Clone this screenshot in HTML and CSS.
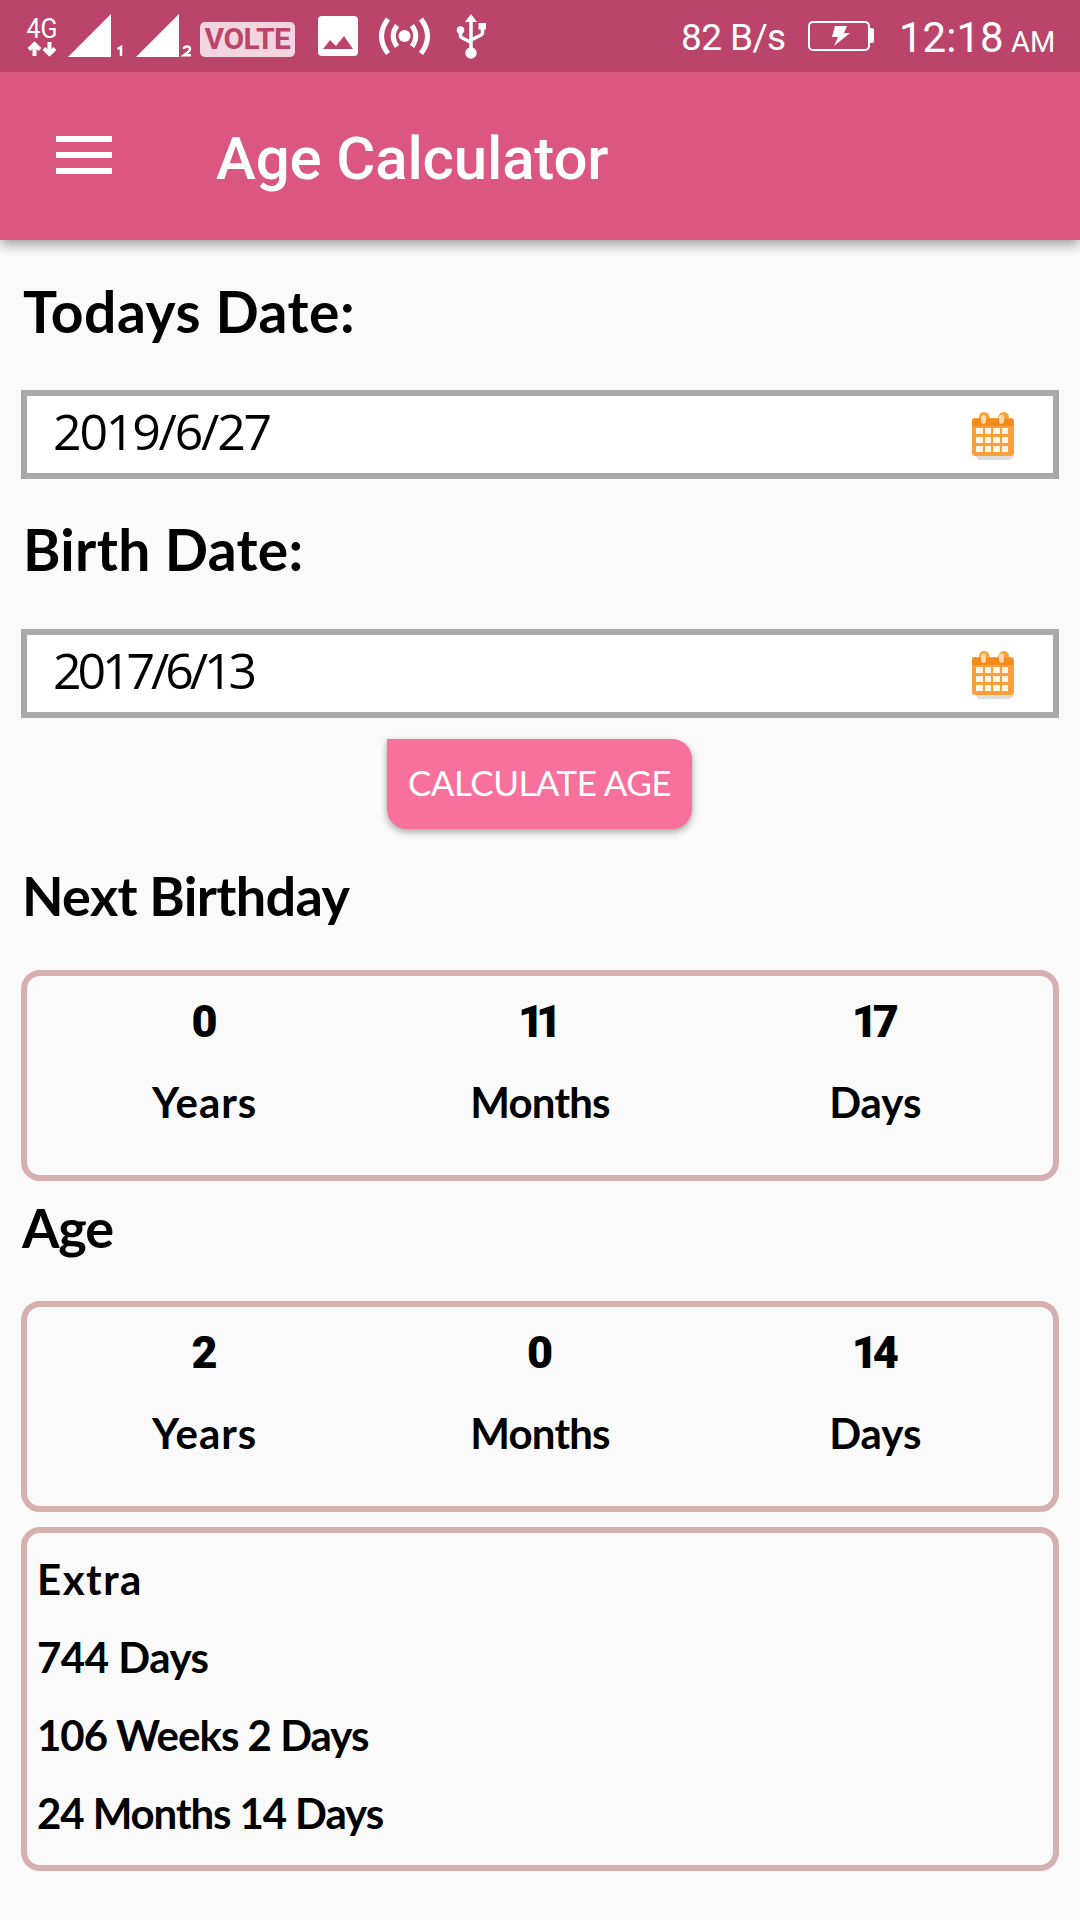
FILE: index.html
```html
<!DOCTYPE html>
<html lang="en">

<head>
  <meta charset="utf-8">
  <title>Age Calculator</title>
  <link rel="stylesheet" href="styles.css">
</head>

<body>
  <svg class="defs">
    <symbol id="calendar" viewBox="0 0 44 50">
      <path d="M4 44h38v3q-2 2-5 2H7z" fill="#ddd" />
      <path d="M3 7h5q0-6 5-6t6 6h8q1-6 6-6t5 6h2q3 0 3 3v32q0 3-3 3H4q-3 0-3-3V10q0-3 2-3z" fill="#f9a03c" />
      <path d="M3 8h37q2 0 2 3v4H1v-4q0-3 2-3z" fill="#f58a1c" />
      <path d="M10 5q3-3 5 0v6q-2 4-5 0zM28 5q3-3 5 0v6q-2 4-5 0z" fill="#fdd9ac" />
      <path d="M5 17h7v6H5zM14 17h6v6h-6zM22 17h7v6h-7zM31 17h6v6h-6zM5 26h7v6H5zM14 26h6v6h-6zM22 26h7v6h-7zM31 26h6v6h-6zM5 35h7v6H5zM14 35h6v6h-6zM22 35h7v6h-7zM31 35h6v6h-6z" fill="#fff6ea" />
    </symbol>
  </svg>

  <div class="status">
    <svg class="network" viewBox="22 0 38 72" width="38" height="72">
      <text x="26.500" y="38" class="net-text" textLength="31" lengthAdjust="spacingAndGlyphs">4G</text>
      <path d="M34.500 56V45M29 49.500l5.500-5.500 5.500 5.500M49.500 42v11M44 48.500l5.500 5.500 5.500-5.500" class="arrows" />
    </svg>
    <svg class="signal" viewBox="68 0 56 72" width="56" height="72">
      <path d="M68 57h43V14z" />
      <path d="M117.500 49l3.500-2v9" class="sim" />
    </svg>
    <svg class="signal second" viewBox="68 0 56 72" width="56" height="72">
      <path d="M68 57h43V14z" />
      <path d="M116 49q0-2.500 3-2.500t3 2.500q0 2-6 6.200h7" class="sim" />
    </svg>
    <span class="volte">VOLTE</span>
    <svg class="picture" viewBox="0 0 40 40" width="40" height="40">
      <path fill-rule="evenodd" d="M4 0h32q4 0 4 4v32q0 4-4 4H4q-4 0-4-4V4q0-4 4-4zM5 33h30L26 20l-8 10-6-6z" />
    </svg>
    <svg class="hotspot" viewBox="379 0 51 72" width="51" height="72">
      <circle cx="404.500" cy="36" r="6" />
      <path d="M397 25.500q-7.500 10.500 0 21M412 25.500q7.500 10.500 0 21M388 19q-13 17 0 34.500M421 19q13 17 0 34.500" class="waves" />
    </svg>
    <svg class="usb" viewBox="456 0 32 72" width="32" height="72">
      <path d="M471 14l6 8h-12z" />
      <circle cx="460.500" cy="30" r="3.800" />
      <path d="M478.500 23h7.500v6.500h-7.500z" />
      <circle cx="471" cy="53" r="5.700" />
      <path d="M471 20v30M460.500 30v6q0 1 1 1.500l9.500 5M482.500 27v6q0 1.500-1.500 2l-10 5" class="wires" />
    </svg>
    <span class="speed">82 B/s</span>
    <svg class="battery" viewBox="0 0 67 30" width="67" height="30">
      <rect x="1" y="1" width="60" height="28" rx="4" class="case" />
      <path d="M61 7h3q2 0 2 2v11q0 2-2 2h-3z" />
      <path d="M27 5h12l-3 7h6L26 25l4-9h-6z" />
    </svg>
    <span class="clock">12:18</span>
    <span class="ampm">AM</span>
  </div>

  <header class="toolbar">
    <div class="burger"><i></i><i></i><i></i></div>
    <h1>Age Calculator</h1>
  </header>

  <main>
    <h2 class="today">Todays Date:</h2>
    <div class="field">
      <span class="date-today">2019/6/27</span>
      <svg width="44" height="50"><use href="#calendar"></use></svg>
    </div>
    <h2 class="birth">Birth Date:</h2>
    <div class="field">
      <span class="date-birth">2017/6/13</span>
      <svg width="44" height="50"><use href="#calendar"></use></svg>
    </div>
    <button class="calculate">CALCULATE AGE</button>

    <h3 class="next">Next Birthday</h3>
    <div class="card result">
      <div><b>0</b><span class="years">Years</span></div>
      <div><b class="ones">11</b><span class="months">Months</span></div>
      <div><b class="two-digit">17</b><span class="days">Days</span></div>
    </div>
    <h3 class="age">Age</h3>
    <div class="card result">
      <div><b>2</b><span class="years">Years</span></div>
      <div><b>0</b><span class="months">Months</span></div>
      <div><b class="two-digit">14</b><span class="days">Days</span></div>
    </div>
    <div class="card extra">
      <p class="extra-title">Extra</p>
      <p class="extra-days">744 Days</p>
      <p class="extra-weeks">106 Weeks 2 Days</p>
      <p class="extra-months">24 Months 14 Days</p>
    </div>
  </main>
</body>

</html>
```
FILE: styles.css
```css
* {
  box-sizing: border-box;
  margin: 0;
  padding: 0;
}

body {
  width: 1080px;
  height: 1920px;
  overflow: hidden;
  background: #fafafa;
  color: #000;
  font-family: Lato, "Open Sans", sans-serif;
}

.defs {
  display: none;
}

/* status bar */
.status {
  position: relative;
  z-index: 1;
  display: flex;
  align-items: flex-start;
  height: 72px;
  padding-left: 22px;
  background: #bb456a;
  color: #fff;
  font-family: Roboto, sans-serif;
  line-height: 72px;
  white-space: nowrap;
}

.status svg {
  flex: none;
  fill: #fff;
}

.status .net-text {
  font-size: 28px;
  font-weight: 400;
}

.status .arrows {
  fill: none;
  stroke: #fff;
  stroke-width: 4;
}

.status .signal {
  margin-left: 8px;
}

.status .second {
  margin-left: 12px;
}

.status .sim {
  fill: none;
  stroke: #fff;
  stroke-width: 2.5;
}

.volte {
  width: 95px;
  height: 35px;
  margin: 22px 0 0 8px;
  border-radius: 5px;
  background: #f3d5e0;
  color: #bb456a;
  font-size: 30px;
  font-weight: 700;
  letter-spacing: -.5px;
  line-height: 34px;
  text-align: center;
}

.status .picture {
  margin: 16px 0 0 23px;
}

.status .hotspot {
  margin-left: 21px;
}

.status .usb {
  margin-left: 26px;
}

.waves {
  fill: none;
  stroke: #fff;
  stroke-width: 5;
}

.wires {
  fill: none;
  stroke: #fff;
  stroke-width: 3.5;
}

.speed {
  width: 127px;
  margin-left: 193px;
  padding-top: 2px;
  font-size: 37px;
  letter-spacing: -.6px;
}

.status .battery {
  margin-top: 21px;
}

.battery .case {
  fill: none;
  stroke: #fff;
  stroke-width: 2;
}

.clock {
  width: 112px;
  margin-left: 24px;
  padding-top: 2px;
  font-size: 42px;
}

.ampm {
  padding-top: 6px;
  font-size: 29px;
}

/* toolbar */
.toolbar {
  display: flex;
  height: 168px;
  padding: 64px 0 0 56px;
  background: #db5680;
  box-shadow: 0 4px 12px rgba(0, 0, 0, .4);
  color: #fff;
}

.burger {
  display: flex;
  flex-direction: column;
  gap: 10px;
  width: 56px;
}

.burger i {
  height: 6px;
  background: #fff;
}

.toolbar h1 {
  margin: -12px 0 0 104px;
  font: 500 60px/70px Roboto, sans-serif;
  letter-spacing: -.15px;
}

/* form */
main {
  padding: 0 21px;
}

h2 {
  height: 150px;
  padding: 35px 0 0 2px;
  font-size: 57px;
  line-height: 72px;
}

.today {
  letter-spacing: .5px;
}

.birth {
  padding-top: 34px;
  letter-spacing: .3px;
}

.field {
  display: flex;
  justify-content: space-between;
  align-items: flex-start;
  height: 89px;
  padding: 15px 38px 0 26px;
  border: 6px solid #a9a9a9;
  background: #fff;
  font-family: "Open Sans", sans-serif;
  font-size: 50px;
  line-height: 40px;
}

.date-today {
  letter-spacing: -2.2px;
}

.date-birth {
  letter-spacing: -4.1px;
}

.calculate {
  display: block;
  width: 305px;
  height: 90px;
  margin: 21px 0 0 366px;
  padding-bottom: 4px;
  border: 0;
  border-radius: 0 20px 20px 20px;
  background: #f8719d;
  box-shadow: 0 3px 7px rgba(0, 0, 0, .35);
  color: #fff;
  font: 400 35px/86px Lato, sans-serif;
  letter-spacing: -.5px;
  white-space: nowrap;
}

/* results */
h3 {
  padding-left: 1px;
  font-size: 54px;
  line-height: 64px;
}

.next {
  height: 141px;
  padding-top: 35px;
  letter-spacing: -.65px;
}

.age {
  height: 120px;
  padding-top: 15px;
  letter-spacing: -1.2px;
}

.card {
  border: 6px solid #d5b0ae;
  border-radius: 19px;
}

.result {
  display: grid;
  grid-template-columns: repeat(3, 1fr);
  height: 211px;
  padding: 18px 10px 0;
  font-size: 42px;
  font-weight: 700;
  line-height: 56px;
  text-align: center;
}

.result b {
  display: block;
  height: 80px;
  font-family: Roboto, sans-serif;
  font-size: 45px;
}

.result .ones {
  margin-right: 8px;
  letter-spacing: -8px;
}

.result .two-digit {
  margin-right: 5px;
  letter-spacing: -5px;
}

.years {
  letter-spacing: 1px;
}

.months {
  letter-spacing: -.8px;
}

.extra {
  height: 344px;
  margin-top: 15px;
  padding: 7px 0 0 10px;
  font-size: 42px;
  font-weight: 700;
  line-height: 78px;
}

.extra-title {
  letter-spacing: 1.5px;
}

.extra-days {
  letter-spacing: -.5px;
}

.extra-weeks {
  letter-spacing: -1px;
}

.extra-months {
  letter-spacing: -1.1px;
}
```
